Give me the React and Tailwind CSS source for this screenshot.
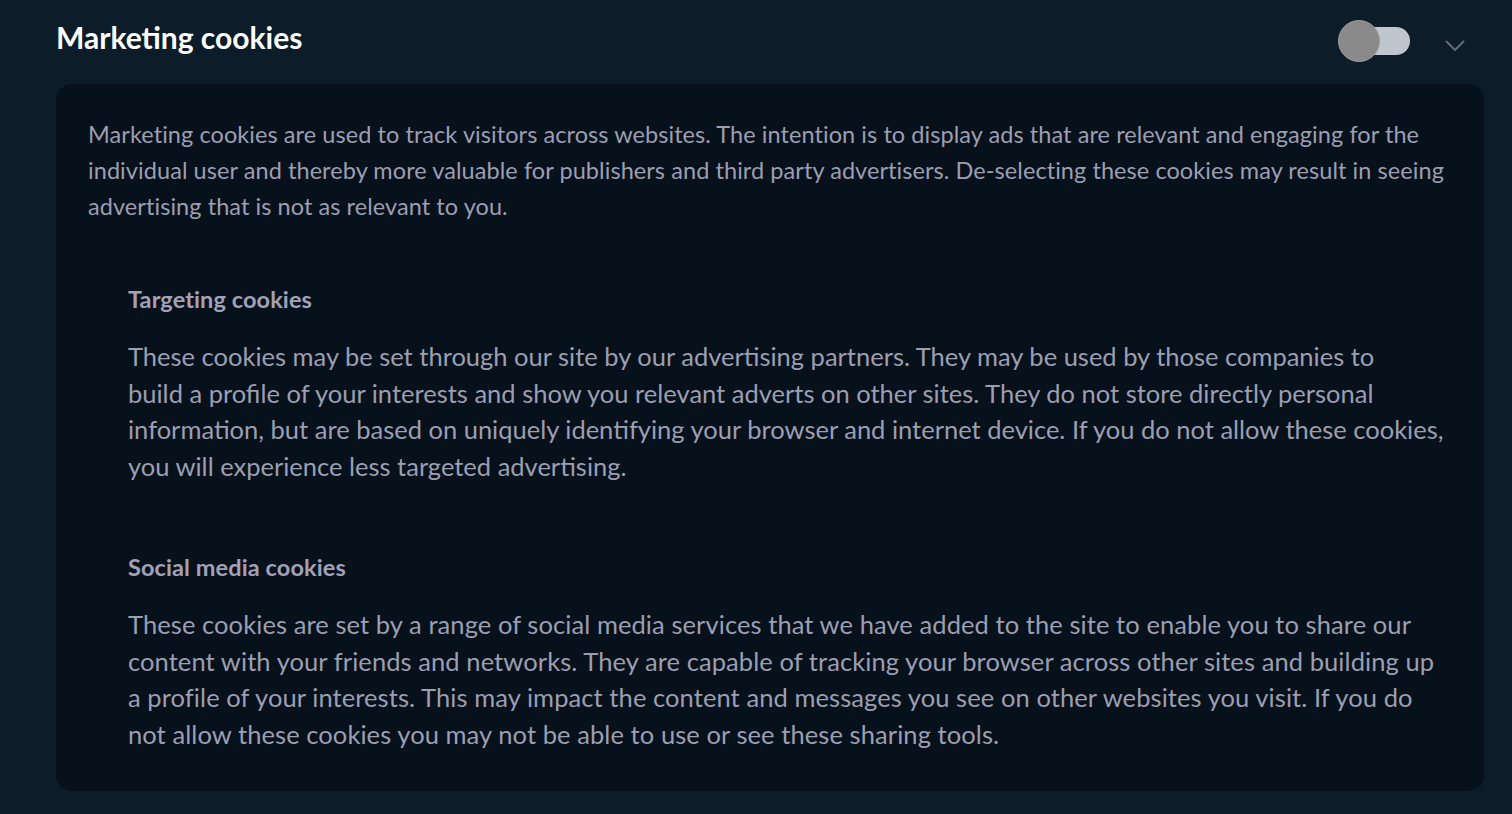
import React, { useState } from 'react';

const sections = [
  {
    title: 'Targeting cookies',
    gap: 'mt-[60px]',
    track: 'tracking-[0px]',
    body: 'These cookies may be set through our site by our advertising partners. They may be used by those companies to\nbuild a profile of your interests and show you relevant adverts on other sites. They do not store directly personal information, but are based on uniquely identifying your browser and internet device. If you do not allow these cookies, you will experience less targeted advertising.',
  },
  {
    title: 'Social media cookies',
    gap: 'mt-[68px]',
    track: 'tracking-[0.08px]',
    body: 'These cookies are set by a range of social media services that we have added to the site to enable you to share our content with your friends and networks. They are capable of tracking your browser across other sites and building up a profile of your interests. This may impact the content and messages you see on other websites you visit. If you do not allow these cookies you may not be able to use or see these sharing tools.',
  },
];

export default function App() {
  const [enabled, setEnabled] = useState(false);

  return (
    <div className="min-h-screen w-full bg-[#0c1c29] pl-[56px] pr-[28px] pt-[14px] pb-[23px] font-['Lato',sans-serif]">
      {/* Header row */}
      <div className="flex items-start justify-between pr-[19px] h-[70px]">
        <h2 className="text-[30px] leading-[46px] font-bold text-white">Marketing cookies</h2>
        <div className="flex items-center gap-[35px] mt-[6px] h-[42px]">
          <button
            onClick={() => setEnabled(!enabled)}
            className="relative w-[68px] h-[28px] rounded-full bg-[#c0c6cd]"
          >
            <span
              className={`absolute top-1/2 -translate-y-1/2 w-[42px] h-[42px] rounded-full bg-[#8a8a8a] border border-[#9b9b9b] ${enabled ? 'left-[30px]' : 'left-[-4px]'}`}
            />
          </button>
          <svg width="20" height="12" viewBox="0 0 20 12" fill="none" className="mt-[10px]">
            <polyline points="1.5,1.5 10,10 18.5,1.5" stroke="#666a6f" strokeWidth="2" strokeLinecap="round" strokeLinejoin="round" />
          </svg>
        </div>
      </div>

      {/* Panel */}
      <div className="rounded-[16px] bg-[#07111b] pl-[32px] pr-[32px] pt-[32px] pb-[39px]">
        <p className="text-[23.5px] leading-[36px] tracking-[0.07px] text-[#9c9eb2]">
          Marketing cookies are used to track visitors across websites. The intention is to display ads that are relevant and engaging for the individual user and thereby more valuable for publishers and third party advertisers. De-selecting these cookies may result in seeing advertising that is not as relevant to you.
        </p>

        <div className="pl-[40px] pr-[6px]">
          {sections.map((s) => (
            <div key={s.title} className={s.gap}>
              <h3 className="text-[23.5px] leading-[30px] font-bold tracking-[0.1px] text-[#a2a1b7]">{s.title}</h3>
              <p className={`mt-[24px] whitespace-pre-line text-[25.5px] leading-[36.5px] text-[#9c9eb2] ${s.track}`}>{s.body}</p>
            </div>
          ))}
        </div>
      </div>
    </div>
  );
}
